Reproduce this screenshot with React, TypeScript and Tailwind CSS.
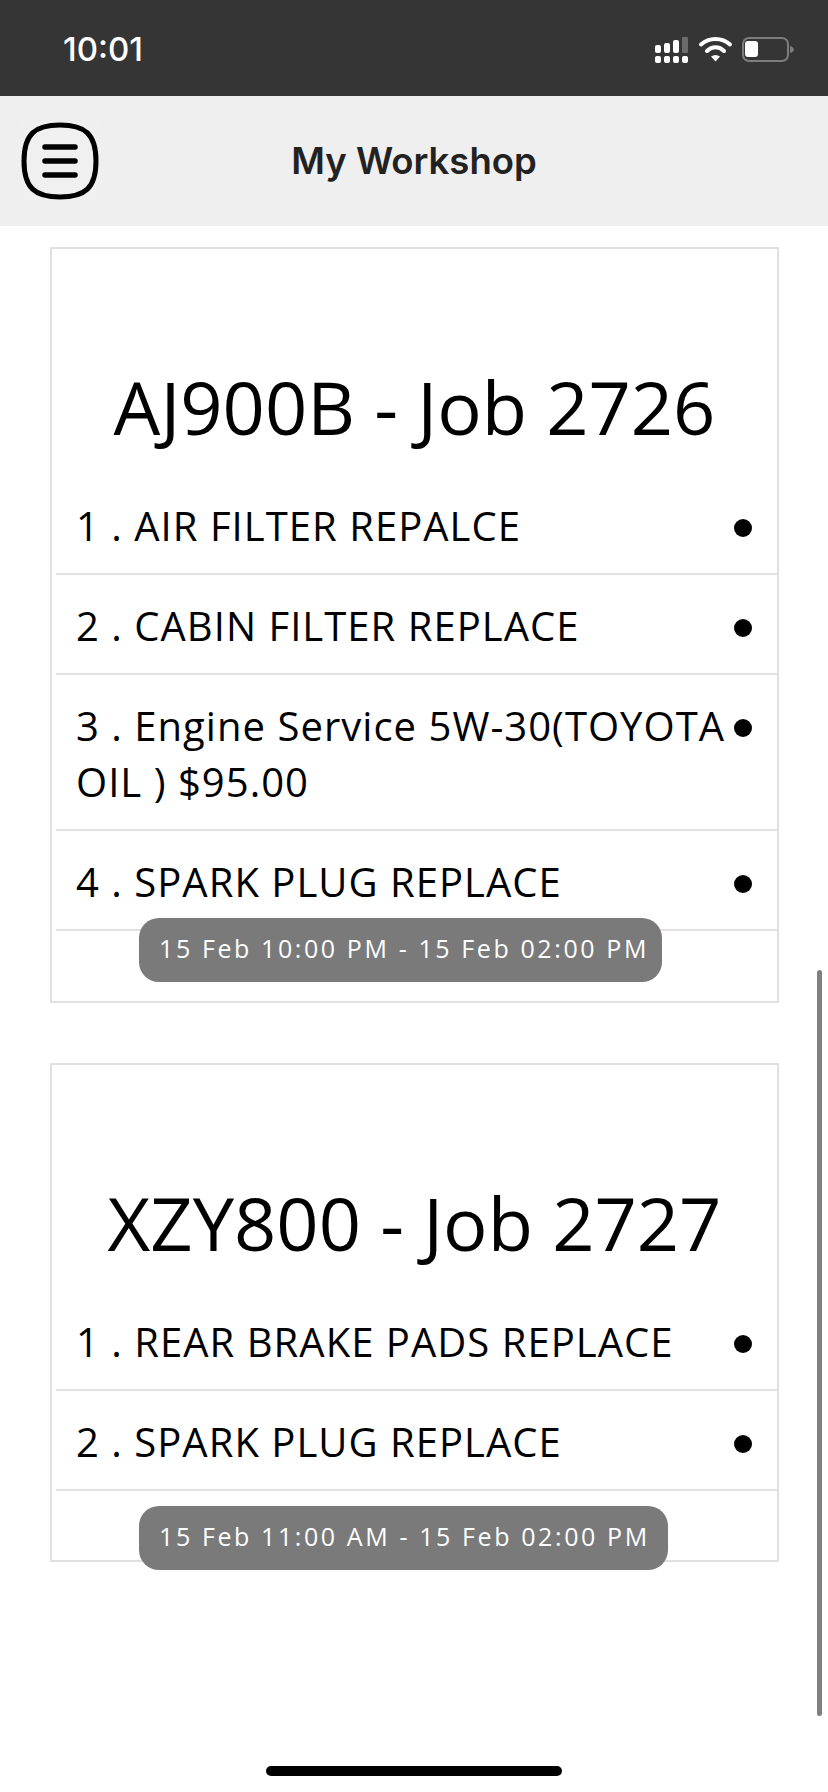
const jobs = [
  {
    title: "AJ900B - Job 2726",
    items: [
      "1 . AIR FILTER REPALCE",
      "2 . CABIN FILTER REPLACE",
      "3 . Engine Service 5W-30(TOYOTA OIL ) $95.00",
      "4 . SPARK PLUG REPLACE",
    ],
    time: "15 Feb 10:00 PM - 15 Feb 02:00 PM",
    cardCls: "h-[756px]",
    pillCls: "top-[669px] w-[523px]",
  },
  {
    title: "XZY800 - Job 2727",
    items: ["1 . REAR BRAKE PADS REPLACE", "2 . SPARK PLUG REPLACE"],
    time: "15 Feb 11:00 AM - 15 Feb 02:00 PM",
    cardCls: "h-[499px] mt-[60px]",
    pillCls: "top-[441px] w-[529px]",
  },
];

function StatusIcons() {
  return (
    <svg className="mt-[4px]" width="140" height="28" viewBox="0 0 140 28" fill="none">
      <g fill="#fff">
        <rect x="1" y="9" width="6" height="8" rx="2" />
        <rect x="10" y="7" width="6" height="10" rx="2" />
        <rect x="19" y="4" width="6" height="13" rx="2" />
        <rect x="28" y="1" width="6" height="16" rx="1" fill="#6b6b6b" />
        <rect x="1" y="20" width="6" height="7" rx="2" />
        <rect x="10" y="20" width="6" height="7" rx="2" />
        <rect x="19" y="20" width="6" height="7" rx="2" />
        <rect x="28" y="20" width="6" height="7" rx="2" />
      </g>
      <path d="M47 8.500C55 1 68 1 76 8.500" stroke="#fff" strokeWidth="4" strokeLinecap="round" />
      <path d="M53 15C58 10 65 10 70 15" stroke="#fff" strokeWidth="4" strokeLinecap="round" />
      <path d="M61.500 25.500L57 20.500C60 18.500 63 18.500 66 20.500Z" fill="#fff" />
      <rect x="89" y="2" width="45" height="23" rx="6" stroke="#7d7d7d" strokeWidth="2" />
      <rect x="91" y="5" width="13" height="16" rx="3" fill="#fff" />
      <path d="M136 10c2 .5 4 2 4 3.500s-2 3-4 3.500z" fill="#7d7d7d" />
    </svg>
  );
}

function MenuIcon() {
  return (
    <svg width="78" height="78" viewBox="0 0 78 78" fill="none">
      <rect width="78" height="78" fill="#f0f0f0" />
      <path
        d="M39 3C64 3 75 12 75 39C75 66 64 75 39 75C14 75 3 66 3 39C3 12 14 3 39 3Z"
        stroke="#000"
        strokeWidth="5"
      />
      <g stroke="#000" strokeWidth="5.500" strokeLinecap="round">
        <line x1="24" y1="25" x2="54" y2="25" />
        <line x1="24" y1="39" x2="54" y2="39" />
        <line x1="24" y1="53" x2="54" y2="53" />
      </g>
    </svg>
  );
}

function JobCard({ job }: { job: (typeof jobs)[number] }) {
  return (
    <div className={`relative ml-[50px] mr-[49px] border-2 border-[#e0e0e0] ${job.cardCls}`}>
      <h2 className="mb-[20px] mt-[110px] h-[96px] text-center text-[74px] leading-[96px] whitespace-nowrap text-black">
        {job.title}
      </h2>
      <ul className="ml-[4px]">
        {job.items.map((item) => (
          <li
            key={item}
            className="flex justify-between border-b-2 border-[#e6e0e0] pb-[19px] pl-[20px] pr-[25px] pt-[23px] text-[40px] leading-[56px] tracking-[1.03px] text-black"
          >
            <span className="w-[655px]">{item}</span>
            <span className="mt-[21px] h-[18px] w-[18px] shrink-0 rounded-full bg-black" />
          </li>
        ))}
      </ul>
      <div
        className={`absolute left-[87px] flex h-[64px] items-center rounded-[20px] bg-[#7a7a7a] pb-[2px] pl-[20px] text-[25px] font-medium tracking-[2.6px] whitespace-nowrap text-white ${job.pillCls}`}
      >
        {job.time}
      </div>
    </div>
  );
}

export default function App() {
  return (
    <div className="relative h-[1792px] w-[828px] overflow-hidden bg-white font-['Open_Sans',sans-serif]">
      <div className="flex h-[96px] items-center justify-between bg-[#353535] pl-[63px] pr-[34px]">
        <span className="mt-[4px] font-['Inter',sans-serif] text-[33px] font-medium text-white">10:01</span>
        <StatusIcons />
      </div>
      <header className="relative flex h-[130px] items-center justify-center bg-[#efefef]">
        <div className="absolute left-[21px] top-[26px]">
          <MenuIcon />
        </div>
        <h1 className="font-['Inter',sans-serif] text-[36.5px] font-semibold text-[#222222]">My Workshop</h1>
      </header>
      <main className="pt-[21px]">
        {jobs.map((job) => (
          <JobCard key={job.title} job={job} />
        ))}
      </main>
      <div className="absolute left-[817px] top-[970px] h-[746px] w-[5px] rounded-full bg-[#808080]" />
      <div className="absolute left-[266px] top-[1766px] h-[10px] w-[296px] rounded-full bg-black" />
    </div>
  );
}
